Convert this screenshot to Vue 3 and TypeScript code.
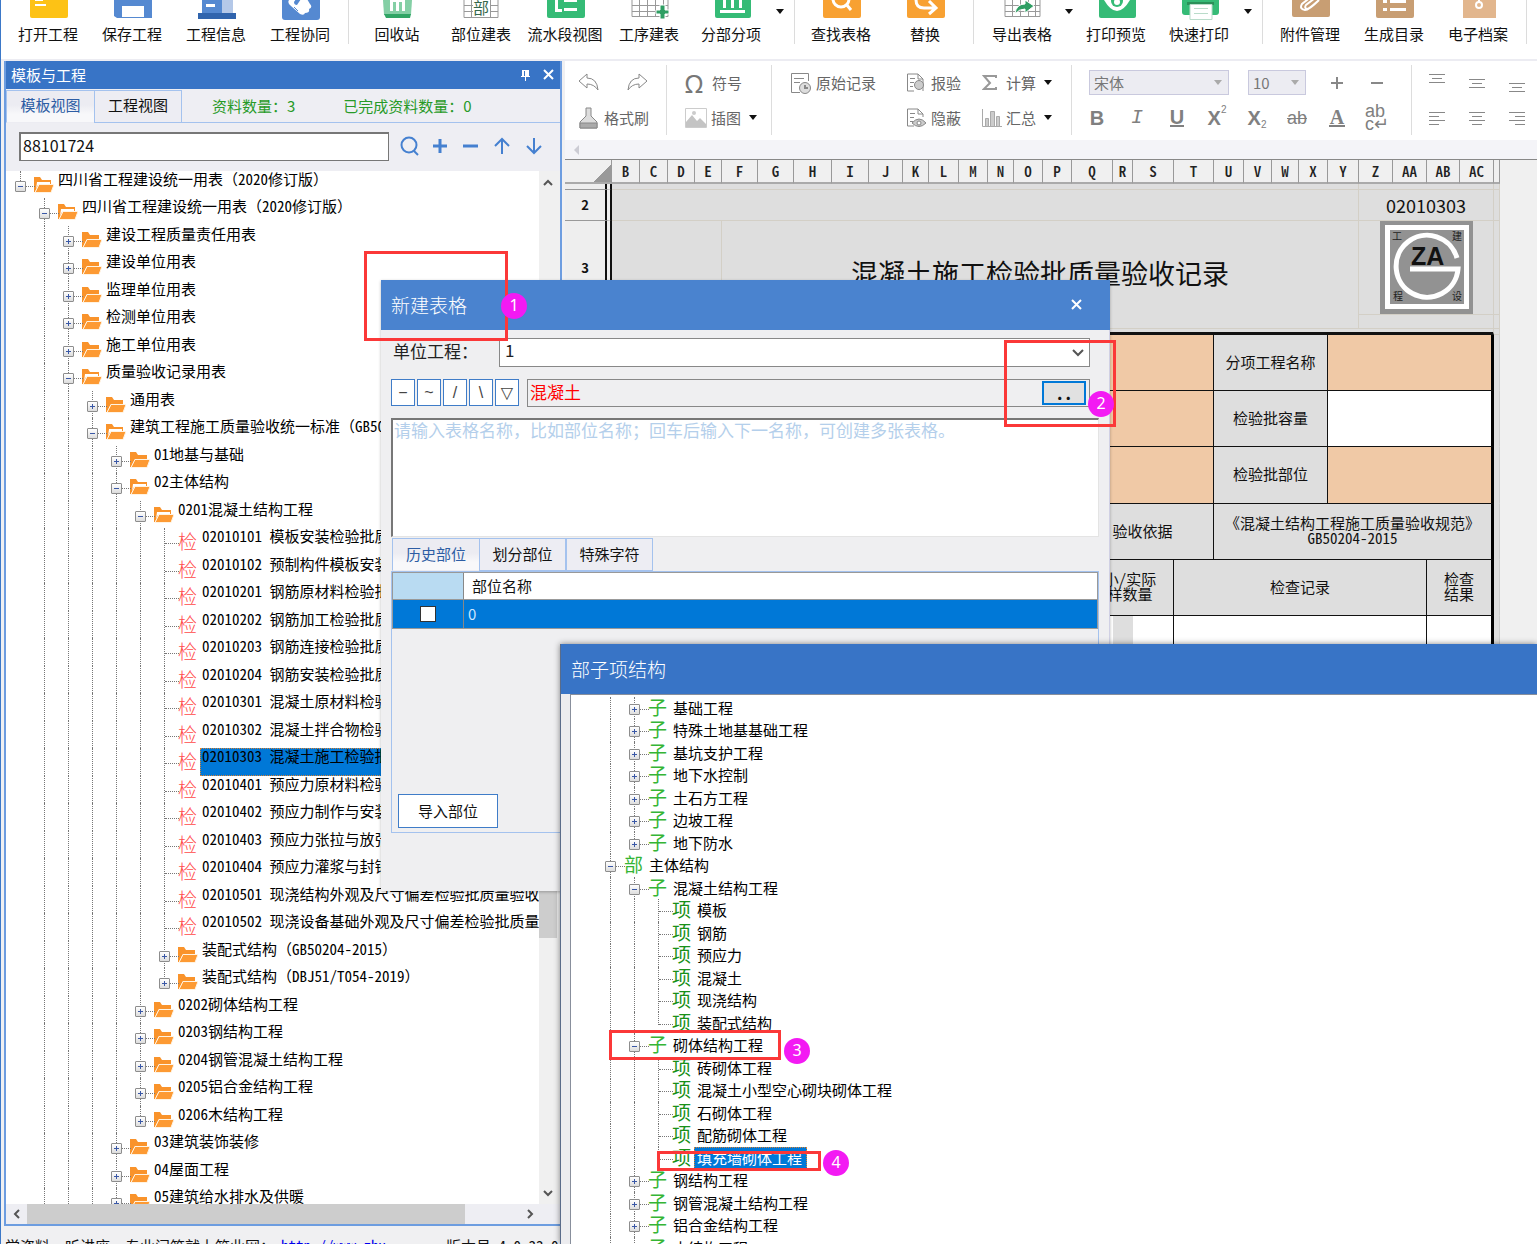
<script setup lang="ts">
interface Node { level: number; kind: string; text: string; selected?: boolean; open?: boolean }
interface Row extends Node { guides: boolean[]; continues: boolean }

const n = (level: number, kind: string, text: string, open = false, selected = false): Node => ({ level, kind, text, open, selected })

// Works out which vertical guide lines run on below each row.
function layout(nodes: Node[], openLevels: number[]): Row[] {
  const runsOn = (i: number, k: number): boolean => {
    for (let j = i + 1; j < nodes.length; j++) {
      if (nodes[j].level < k) return false
      if (nodes[j].level === k) return true
    }
    return openLevels.includes(k)
  }
  return nodes.map((node, i) => ({
    ...node,
    guides: Array.from({ length: node.level }, (_, k) => runsOn(i, k)),
    continues: runsOn(i, node.level),
  }))
}

const forms = layout([
  n(0, 'folder', '四川省工程建设统一用表（2020修订版）', true),
  n(1, 'folder', '四川省工程建设统一用表（2020修订版）', true),
  n(2, 'folder', '建设工程质量责任用表'),
  n(2, 'folder', '建设单位用表'),
  n(2, 'folder', '监理单位用表'),
  n(2, 'folder', '检测单位用表'),
  n(2, 'folder', '施工单位用表'),
  n(2, 'folder', '质量验收记录用表', true),
  n(3, 'folder', '通用表'),
  n(3, 'folder', '建筑工程施工质量验收统一标准（GB50300-2013）', true),
  n(4, 'folder', '01地基与基础'),
  n(4, 'folder', '02主体结构', true),
  n(5, 'folder', '0201混凝土结构工程', true),
  n(6, '检', '02010101 模板安装检验批质量验收记录'),
  n(6, '检', '02010102 预制构件模板安装检验批质量验收记录'),
  n(6, '检', '02010201 钢筋原材料检验批质量验收记录'),
  n(6, '检', '02010202 钢筋加工检验批质量验收记录'),
  n(6, '检', '02010203 钢筋连接检验批质量验收记录'),
  n(6, '检', '02010204 钢筋安装检验批质量验收记录'),
  n(6, '检', '02010301 混凝土原材料检验批质量验收记录'),
  n(6, '检', '02010302 混凝土拌合物检验批质量验收记录'),
  n(6, '检', '02010303 混凝土施工检验批质量验收记录', false, true),
  n(6, '检', '02010401 预应力原材料检验批质量验收记录'),
  n(6, '检', '02010402 预应力制作与安装检验批质量验收记录'),
  n(6, '检', '02010403 预应力张拉与放张检验批质量验收记录'),
  n(6, '检', '02010404 预应力灌浆与封锚检验批质量验收记录'),
  n(6, '检', '02010501 现浇结构外观及尺寸偏差检验批质量验收记录'),
  n(6, '检', '02010502 现浇设备基础外观及尺寸偏差检验批质量验收记录'),
  n(6, 'folder', '装配式结构（GB50204-2015）'),
  n(6, 'folder', '装配式结构（DBJ51/T054-2019）'),
  n(5, 'folder', '0202砌体结构工程'),
  n(5, 'folder', '0203钢结构工程'),
  n(5, 'folder', '0204钢管混凝土结构工程'),
  n(5, 'folder', '0205铝合金结构工程'),
  n(5, 'folder', '0206木结构工程'),
  n(4, 'folder', '03建筑装饰装修'),
  n(4, 'folder', '04屋面工程'),
  n(4, 'folder', '05建筑给水排水及供暖'),
], [1, 2, 3, 4])

const parts = layout([
  n(1, '子', '基础工程'),
  n(1, '子', '特殊土地基基础工程'),
  n(1, '子', '基坑支护工程'),
  n(1, '子', '地下水控制'),
  n(1, '子', '土石方工程'),
  n(1, '子', '边坡工程'),
  n(1, '子', '地下防水'),
  n(0, '部', '主体结构', true),
  n(1, '子', '混凝土结构工程', true),
  n(2, '项', '模板'),
  n(2, '项', '钢筋'),
  n(2, '项', '预应力'),
  n(2, '项', '混凝土'),
  n(2, '项', '现浇结构'),
  n(2, '项', '装配式结构'),
  n(1, '子', '砌体结构工程', true),
  n(2, '项', '砖砌体工程'),
  n(2, '项', '混凝土小型空心砌块砌体工程'),
  n(2, '项', '石砌体工程'),
  n(2, '项', '配筋砌体工程'),
  n(2, '项', '填充墙砌体工程', false, true),
  n(1, '子', '钢结构工程'),
  n(1, '子', '钢管混凝土结构工程'),
  n(1, '子', '铝合金结构工程'),
  n(1, '子', '木结构工程'),
], [0, 1])

const isLeaf = (r: Node) => r.kind === '检' || r.kind === '项'

// Splits a label so that brackets keep their full width beside half-width digits.
const runs = (text: string) => text.split(/([（）])/).filter(Boolean)
const isBracket = (s: string) => s === '（' || s === '）'

type Tool = { type: 'tool' | 'sep' | 'more'; label?: string; icon?: string }
const t = (label: string, icon: string): Tool => ({ type: 'tool', label, icon })
const sep: Tool = { type: 'sep' }
const more: Tool = { type: 'more' }
const tools: Tool[] = [
  t('打开工程', 'open'), t('保存工程', 'save'), t('工程信息', 'info'), t('工程协同', 'share'), sep,
  t('回收站', 'bin'), t('部位建表', 'part'), t('流水段视图', 'flow'), t('工序建表', 'step'), t('分部分项', 'div'), more, sep,
  t('查找表格', 'find'), t('替换', 'swap'), sep,
  t('导出表格', 'export'), more, t('打印预览', 'preview'), t('快速打印', 'print'), more, sep,
  t('附件管理', 'clip'), t('生成目录', 'list'), t('电子档案', 'archive'), sep,
]

const columns: [string, number][] = [
  ['B', 28], ['C', 28], ['D', 27], ['E', 27], ['F', 36], ['G', 36], ['H', 38], ['I', 37], ['J', 34], ['K', 26],
  ['L', 30], ['M', 29], ['N', 26], ['O', 29], ['P', 29], ['Q', 41], ['R', 20], ['S', 41], ['T', 40], ['U', 30],
  ['V', 28], ['W', 27], ['X', 29], ['Y', 31], ['Z', 34], ['AA', 34], ['AB', 33], ['AC', 34],
]

const marks = [
  { no: 1, x: 364, y: 251, w: 144, h: 90, cx: 514, cy: 306 },
  { no: 2, x: 1004, y: 340, w: 112, h: 87, cx: 1101, cy: 404 },
  { no: 3, x: 609, y: 1030, w: 172, h: 30, cx: 797, cy: 1051 },
  { no: 4, x: 657, y: 1151, w: 164, h: 20, cx: 836, cy: 1163 },
]
const symbols = ['−', '~', '/', '\\', '▽']
</script>

<template>
  <div class="app">
    <header class="ribbon">
      <template v-for="(tool, i) in tools" :key="i">
        <span v-if="tool.type === 'sep'" class="ribbon-sep"></span>
        <button v-else-if="tool.type === 'more'" class="more" aria-label="更多"><i class="caret"></i></button>
        <button v-else class="tool">
          <svg width="40" height="21" viewBox="0 0 40 21" aria-hidden="true">
            <g v-if="tool.icon === 'open'"><path fill="#fdc215" d="M2 0h38v16q0 2-2 2H4q-2 0-2-2z" /><path fill="#fff" d="M7 0h8v1H7zM7 4h11v2H7z" /></g>
            <g v-else-if="tool.icon === 'save'"><path fill="#5589d1" d="M2 0h38v18H5l-3-2z" /><path fill="#fff" d="M10 6h22v11H10z" /></g>
            <g v-else-if="tool.icon === 'info'"><path fill="#5589d1" d="M6 0h20v13H6z" /><path fill="#b4c8e8" d="M26 0h11v13H26z" /><path fill="#fff" d="M10 4h9v3h-9z" /><path fill="#3064ad" d="M2 13h38v6H2z" /></g>
            <g v-else-if="tool.icon === 'share'"><path fill="#5589d1" d="M2 0h38v17q0 3-3 3H5q-3 0-3-3z" /><path fill="#fff" d="M9 0q-2 3 2 6l9 8q4 2 5-1 5 0 4-4 4-2 1-5l-3-5h-6l-4 6q-3 0-3-3l2-3h-6z" /><path d="M14 7l4 4M11 10l4 4" stroke="#5589d1" stroke-width="1" /></g>
            <g v-else-if="tool.icon === 'bin'"><path fill="#84cfa5" d="M6 0h29l-1 15H7z" /><path fill="#31a565" d="M7 14h27l-1 4H9z" /><path fill="#fff" d="M13 0h15v11h-3V2h-3v9h-3V2h-3v9h-3z" /></g>
            <g v-else-if="tool.icon === 'part'" fill="none" stroke="#999"><path d="M3 0v17.500h34V0M3 5.500h34M3 11.500h34M10.500 0v17M29.500 0v17" /><path d="M12 0h17v16H12z" fill="#fff" stroke="none" /><text x="12" y="14" font-size="16" fill="#35684c" stroke="none">部</text></g>
            <g v-else-if="tool.icon === 'flow'"><path fill="#35bb76" d="M2 0h38v16q0 2-2 2H4q-2 0-2-2z" /><path fill="#fff" d="M10 0h3v9h4v3h-7zM19 0h13v2H19zM19 8h13v3H19z" /></g>
            <g v-else-if="tool.icon === 'step'"><path fill="none" stroke="#999" d="M3 0v16.500h36V0M3 5.500h36M3 11.500h36M10.500 0v16M18.500 0v16M26.500 0v16M34.500 0v16" /><path fill="#2f9e63" stroke="#fff" d="M31 5h5v5h4v4h-4v5h-5v-5h-4v-4h4z" /></g>
            <g v-else-if="tool.icon === 'div'"><path fill="#35bb76" d="M4 0h36v16q0 2-2 2H6q-2 0-2-2z" /><path fill="#fff" d="M12 0h3v8h-3zM20 0h3v8h-3zM28 0h3v8h-3zM9 10h25v3H9z" /></g>
            <g v-else-if="tool.icon === 'find'"><path fill="#f8a132" d="M2 0h38v16q0 2-2 2H4q-2 0-2-2z" /><circle cx="20" cy="-1" r="8" fill="none" stroke="#fff" stroke-width="3" /><path d="M25 4l5 6" stroke="#fff" stroke-width="3" /></g>
            <g v-else-if="tool.icon === 'swap'"><path fill="#f8a132" d="M2 0h38v16q0 2-2 2H4q-2 0-2-2z" /><path fill="none" stroke="#fff" stroke-width="3" d="M11 0q0 8 8 8h11M24 1l7 7-7 6" /></g>
            <g v-else-if="tool.icon === 'export'"><path fill="none" stroke="#999" d="M3 0v16.500h35V0M3 5.500h35M3 11.500h35M10.500 0v16M18.500 0v16M26.500 0v16M33.500 0v16" /><path fill="#2f9e63" stroke="#fff" d="M13 14q1-10 10-10V0l9 6-9 7V9q-6 0-10 5z" /></g>
            <g v-else-if="tool.icon === 'preview'"><path fill="#35bb76" d="M3 0h37v16q0 2-2 2H5q-2 0-2-2z" /><path fill="#fff" d="M8 0q13 22 26 0z" /><circle cx="21" cy="1" r="6" fill="#35bb76" /><circle cx="21" cy="2" r="3" fill="#fff" /></g>
            <g v-else-if="tool.icon === 'print'"><path fill="#35bb76" d="M3 0h37v12q0 3-3 3H6q-3 0-3-3z" /><path fill="#2a9058" d="M8 2h27v3H8z" /><path fill="#fff" stroke="#b9dcca" d="M11 4.500h22v15H11z" /><path fill="#b9dcca" d="M15 8h14v1H15zM15 13h14v1H15z" /></g>
            <g v-else-if="tool.icon === 'clip'"><path fill="#c89e73" d="M2 0h38v15q0 2-2 2H4q-2 0-2-2z" /><path fill="none" stroke="#fff" stroke-width="2" d="M25-2l-9 7q-2 3 1 4 2 0 12-9M22-4L12 4q-3 5 3 6 4 0 14-10" /></g>
            <g v-else-if="tool.icon === 'list'"><path fill="#c89e73" d="M2 0h38v16q0 2-2 2H4q-2 0-2-2z" /><path fill="#fff" d="M9 0h4v3H9zM16 0h16v3H16zM9 8h4v3H9zM16 8h16v3H16z" /></g>
            <g v-else><path fill="#e2b68d" d="M5 0h33v18H5z" /><circle cx="21" cy="5" r="3" fill="none" stroke="#fff" stroke-width="2" /><path stroke="#fff" stroke-width="2" d="M21 0v2" /></g>
          </svg>
          <span>{{ tool.label }}</span>
        </button>
      </template>
    </header>

    <div class="workspace">
      <aside class="panel">
        <div class="panel-head">
          <span>模板与工程</span>
          <button aria-label="固定"><svg width="12" height="12" viewBox="0 0 12 12"><path fill="#fff" d="M3 1h7v6h1v1H7v4H6V8H2V7h1z" /><path d="M5 2h1v5H5z" fill="#3874c6" /></svg></button>
          <button aria-label="关闭"><svg width="12" height="12" viewBox="0 0 12 12"><path stroke="#fff" stroke-width="2" d="M1 1l9 9M10 1l-9 9" /></svg></button>
        </div>
        <div class="panel-tabs">
          <button class="tab on">模板视图</button><button class="tab">工程视图</button>
          <span class="count">资料数量：3</span><span class="count">已完成资料数量：0</span>
        </div>
        <div class="search">
          <input value="88101724" aria-label="搜索" />
          <button aria-label="查找"><svg width="20" height="20" viewBox="0 0 20 20"><circle cx="9" cy="9" r="7.500" /><path d="M14 15l4 4" /></svg></button>
          <button aria-label="添加"><svg width="20" height="20" viewBox="0 0 20 20"><path d="M9 3v14M2 10h14" stroke-width="3" /></svg></button>
          <button aria-label="删除"><svg width="20" height="20" viewBox="0 0 20 20"><path d="M1 10h15" stroke-width="3" /></svg></button>
          <button aria-label="上移"><svg width="20" height="20" viewBox="0 0 20 20"><path d="M9 18V3M2 10l7-7 7 7" /></svg></button>
          <button aria-label="下移"><svg width="20" height="20" viewBox="0 0 20 20"><path d="M10 2v15M3 10l7 7 7-7" /></svg></button>
        </div>
        <div class="tree-box">
          <ul class="tree forms">
            <li v-for="(r, i) in forms" :key="i">
              <i v-for="(g, k) in r.guides" :key="k" class="cell" :class="{ line: g }"></i>
              <i class="cell own line" :class="{ half: !r.continues }">
                <button v-if="!isLeaf(r)" class="box" :class="{ plus: !r.open }" aria-label="展开或收起"></button>
              </i>
              <span class="icon">
                <svg v-if="r.kind === 'folder'" width="20" height="17" viewBox="0 0 20 17" aria-hidden="true">
                  <path fill="#f9932b" d="M0 1h6l2 3h9v4H5L1 16H0z" />
                  <path v-if="r.open" fill="#fff" d="M3 6h13v3H4l-2 4z" />
                  <path fill="#fd9a33" stroke="#fff3e2" d="M5 8.500h15l-3 8H1z" />
                </svg>
                <span v-else class="mark">{{ r.kind }}</span>
              </span>
              <span class="label" :class="{ selected: r.selected }"><span v-for="(s, k) in runs(r.text)" :key="k" :class="{ bracket: isBracket(s) }">{{ s }}</span></span>
            </li>
          </ul>
          <div class="vbar">
            <svg width="12" height="20" viewBox="0 0 12 20"><path d="M2 14l4-4 4 4" /></svg>
            <i class="gap-a"></i><i class="thumb"></i><i class="gap-b"></i>
            <svg width="12" height="20" viewBox="0 0 12 20"><path d="M2 7l4 4 4-4" /></svg>
          </div>
        </div>
        <div class="hbar">
          <svg width="20" height="12" viewBox="0 0 20 12"><path d="M12 2L8 6l4 4" /></svg>
          <i class="thumb"></i><i class="gap"></i>
          <svg width="20" height="12" viewBox="0 0 20 12"><path d="M9 2l4 4-4 4" /></svg>
        </div>
      </aside>

      <main class="editor">
        <div class="edit-bar">
          <div class="group g1">
            <div class="line-a">
              <button aria-label="撤销"><svg width="22" height="20" viewBox="0 0 22 20"><path d="M1 8l8-7v4q10 0 11 12-4-6-11-6v4z" /></svg></button>
              <button aria-label="重做"><svg width="22" height="20" viewBox="0 0 22 20"><path d="M21 8l-8-7v4Q3 5 2 17q4-6 11-6v4z" /></svg></button>
            </div>
            <div><button><svg width="22" height="24" viewBox="0 0 22 24"><path fill="#ddd" d="M8 2h5v8l6 6v6H2v-6l6-6z" /><path fill="#aaa" d="M2 17h17v5H2z" /></svg>格式刷</button></div>
          </div>
          <div class="group g2">
            <div><button><span class="omega">Ω</span>符号</button></div>
            <div><button><svg width="22" height="22" viewBox="0 0 22 22"><path stroke="#ccc" d="M.5 1.500h21v19H.5z" /><path fill="#c4c4c4" stroke="none" d="M1 20v-5l6-7 5 6 3-3 6 6v3z" /><circle cx="9" cy="6" r="2" fill="#ccc" stroke="none" /></svg>插图<i class="caret"></i></button></div>
          </div>
          <div class="group g3">
            <div><button><svg width="22" height="22" viewBox="0 0 22 22"><path stroke-width="1" d="M10 20.500H1.500v-19h17V9M4 6.500h10M4 10.500h6" /><circle cx="15" cy="16" r="5.500" fill="#ddd" /><path stroke-width="2" d="M15 13v3h3" /></svg>原始记录</button></div>
            <div></div>
          </div>
          <div class="group g4">
            <div><button><svg width="21" height="22" viewBox="0 0 21 22"><path d="M8 19H1.500V2H12l5 5M4 6.500h5M4 10.500h4M4 14.500h3M12 2v5h5v12" /><circle cx="13" cy="13" r="4.500" fill="#ccc" /></svg>报验</button></div>
            <div><button><svg width="21" height="22" viewBox="0 0 21 22"><path d="M8 19H1.500V2H12l5 5M4 6.500h5M4 10.500h4M4 14.500h3M12 2v5h5v3" /><path fill="#ccc" d="M6 16q7-8 14 0-7 7-14 0z" /><circle cx="13" cy="16" r="2" fill="#fff" /></svg>隐蔽</button></div>
          </div>
          <div class="group g5">
            <div><button><svg width="20" height="20" viewBox="0 0 20 20"><path stroke-width="2" stroke="#999" d="M14 5V3H2l6 7-6 6h12v-2" /></svg>计算<i class="caret"></i></button></div>
            <div><button><svg width="20" height="20" viewBox="0 0 20 20"><path stroke="#aaa" d="M.500 1v17.500H20" /><path fill="#ccc" stroke="#aaa" d="M3.500 10.500h3v8h-3zM8.500 3.500h4v15h-4zM14.500 8.500h3v10h-3z" /></svg>汇总<i class="caret"></i></button></div>
          </div>
          <div class="group g6">
            <div class="fonts">
              <select class="family" aria-label="字体"><option>宋体</option></select>
              <select class="size" aria-label="字号"><option>10</option></select>
              <button class="sq" aria-label="增大"><svg width="14" height="14" viewBox="0 0 14 14"><path stroke-width="2" d="M7 1v12M1 7h12" /></svg></button>
              <button class="sq" aria-label="减小"><svg width="14" height="14" viewBox="0 0 14 14"><path stroke-width="2" d="M1 7h12" /></svg></button>
            </div>
            <div class="styles">
              <button class="sq"><b>B</b></button>
              <button class="sq"><em>I</em></button>
              <button class="sq"><b class="under">U</b></button>
              <button class="sq"><b>X</b><sup>2</sup></button>
              <button class="sq"><b>X</b><sub>2</sub></button>
              <button class="sq"><s>ab</s></button>
              <button class="sq"><b class="serif">A</b></button>
              <button class="sq wrap"><span>ab</span><span>c↵</span></button>
            </div>
          </div>
          <div class="group g7">
            <div>
              <button class="sq" aria-label="顶端对齐"><svg width="16" height="20" viewBox="0 0 16 20"><path d="M0 1.500h16M3 5.500h10M0 9.500h16" /></svg></button>
              <button class="sq" aria-label="垂直居中"><svg width="16" height="20" viewBox="0 0 16 20"><path d="M0 6.500h16M3 10.500h10M0 14.500h16" /></svg></button>
              <button class="sq" aria-label="底端对齐"><svg width="16" height="20" viewBox="0 0 16 20"><path d="M0 10.500h16M3 14.500h10M0 18.500h16" /></svg></button>
            </div>
            <div>
              <button class="sq" aria-label="左对齐"><svg width="16" height="20" viewBox="0 0 16 20"><path d="M0 4.500h16M0 8.500h10M0 12.500h16M0 16.500h10" /></svg></button>
              <button class="sq" aria-label="居中"><svg width="16" height="20" viewBox="0 0 16 20"><path d="M0 4.500h16M3 8.500h10M0 12.500h16M3 16.500h10" /></svg></button>
              <button class="sq" aria-label="右对齐"><svg width="16" height="20" viewBox="0 0 16 20"><path d="M0 4.500h16M6 8.500h10M0 12.500h16M6 16.500h10" /></svg></button>
            </div>
          </div>
        </div>
        <div class="formula"><svg width="6" height="10" viewBox="0 0 6 10"><path fill="#ccccd4" d="M5 0v10L0 5z" /></svg></div>

        <table class="sheet">
          <colgroup>
            <col style="width: 47px" />
            <col v-for="c in columns" :key="c[0]" :style="{ width: c[1] + 'px' }" />
            <col style="width: 6px" />
          </colgroup>
          <thead>
            <tr><th class="corner"></th><th v-for="c in columns" :key="c[0]">{{ c[0] }}</th><th></th></tr>
          </thead>
          <tbody>
            <tr class="h6"><th></th><td colspan="24"></td><td colspan="4"></td><td></td></tr>
            <tr class="h32"><th>2</th><td colspan="24"></td><td colspan="4" class="code">02010303</td><td></td></tr>
            <tr class="h93">
              <th>3</th><td colspan="4" rowspan="2"></td><td colspan="20" rowspan="2" class="title">混凝土施工检验批质量验收记录</td>
              <td colspan="4" class="logo">
                <svg width="93" height="93" viewBox="0 0 93 93">
                  <path fill="#929292" d="M0 0h93v93H0z" /><path fill="#fff" d="M5 4h84v84H5z" /><path fill="#929292" d="M10 9h74v74H10z" />
                  <path fill="none" stroke="#fff" stroke-width="5" d="M77 37A31 31 0 1 0 78 48H30" />
                  <text x="31" y="44" font-size="25" font-weight="700" font-family="Liberation Sans" fill="#111">ZA</text>
                  <g font-size="10" fill="#222"><text x="12" y="19">工</text><text x="72" y="19">建</text><text x="13" y="79">程</text><text x="72" y="79">设</text></g>
                </svg>
              </td><td></td>
            </tr>
            <tr class="h14"><th></th><td colspan="4"></td><td></td></tr>
            <tr class="h6 top"><th></th><td colspan="28"></td><td></td></tr>
            <tr class="h56 form"><th>5</th><td colspan="19" class="peach"></td><td colspan="4">分项工程名称</td><td colspan="5" class="peach"></td><td></td></tr>
            <tr class="h56 form"><th>6</th><td colspan="19" class="peach"></td><td colspan="4">检验批容量</td><td colspan="5" class="white"></td><td></td></tr>
            <tr class="h57 form"><th>7</th><td colspan="19" class="peach"></td><td colspan="4">检验批部位</td><td colspan="5" class="peach"></td><td></td></tr>
            <tr class="h56 form"><th>8</th><td colspan="15"></td><td colspan="4">验收依据</td><td colspan="9">《混凝土结构工程施工质量验收规范》<br /><span class="half-width">GB50204-2015</span></td><td></td></tr>
            <tr class="h56 form"><th>9</th><td colspan="15"></td><td colspan="3">最小<span class="half-width">/</span>实际<br />抽样数量</td><td colspan="8">检查记录</td><td colspan="2">检查<br />结果</td><td></td></tr>
            <tr class="h56 form"><th>10</th><td colspan="15" class="white"></td><td class="white plain"></td><td class="plain"></td><td class="white"></td><td colspan="8" class="white"></td><td colspan="2" class="white"></td><td></td></tr>
          </tbody>
        </table>
      </main>
    </div>

    <footer class="status">
      <span>学资料、听讲座、专业问答就上筑业网：</span><a href="#">http://www.zhu</a><span>版本号:4.0.33.0</span>
    </footer>

    <section class="dialog create">
      <h2>新建表格<button aria-label="关闭"><svg width="12" height="12" viewBox="0 0 12 12"><path stroke="#fff" stroke-width="2" d="M1 1l9 9M10 1l-9 9" /></svg></button></h2>
      <div class="create-body">
        <div class="unit"><label for="unit">单位工程：</label><select id="unit"><option>1</option></select></div>
        <div class="name">
          <button v-for="s in symbols" :key="s" class="sym">{{ s }}</button>
          <div class="field"><input value="混凝土" aria-label="表格名称" /><button>..</button></div>
        </div>
        <textarea aria-label="部位名称" placeholder="请输入表格名称，比如部位名称；回车后输入下一名称，可创建多张表格。"></textarea>
        <div class="part-tabs"><button class="tab on">历史部位</button><button class="tab">划分部位</button><button class="tab">特殊字符</button></div>
        <div class="history">
          <table>
            <thead><tr><th class="tick"></th><th>部位名称</th></tr></thead>
            <tbody><tr><td class="tick"><input type="checkbox" aria-label="选择" /></td><td>0</td></tr></tbody>
          </table>
          <button class="import">导入部位</button>
        </div>
      </div>
    </section>

    <section class="dialog structure">
      <h2>部子项结构</h2>
      <div class="structure-body">
        <ul class="tree parts">
          <li v-for="(r, i) in parts" :key="i">
            <i v-for="(g, k) in r.guides" :key="k" class="cell" :class="{ line: g }"></i>
            <i class="cell own line" :class="{ half: !r.continues }">
              <button v-if="!isLeaf(r)" class="box" :class="{ plus: !r.open }" aria-label="展开或收起"></button>
            </i>
            <span class="icon"><span class="mark" :class="{ dark: r.kind === '项' }">{{ r.kind }}</span></span>
            <span class="label" :class="{ selected: r.selected }">{{ r.text }}</span>
          </li>
        </ul>
      </div>
    </section>

    <template v-for="m in marks" :key="m.no">
      <div class="frame" :style="{ left: m.x + 'px', top: m.y + 'px', width: m.w + 'px', height: m.h + 'px' }"></div>
      <div class="pin" :style="{ left: m.cx - 13 + 'px', top: m.cy - 13 + 'px' }">{{ m.no }}</div>
    </template>
  </div>
</template>

<style>
body { margin: 0; }
</style>

<style scoped>
* { box-sizing: border-box; }
.app {
  position: relative; display: flex; flex-direction: column; height: 100vh; overflow: hidden;
  border-left: 1px solid #3b78c8; background: #f0f0f2; color: #111;
  font: 15px/20px "Noto Sans CJK SC", sans-serif;
}
button, input, select, textarea { font: inherit; color: inherit; margin: 0; padding: 0; border: 0; border-radius: 0; background: none; }
button { white-space: nowrap; }
svg { display: block; flex: none; }
.caret { display: inline-block; width: 8px; border: 4px solid transparent; border-top: 5px solid #111; border-bottom: 0; }

.ribbon {
  display: grid; flex: none; height: 61px; padding-left: 5px; background: #fff; border-bottom: 2px solid #ececf2; overflow: hidden;
  grid-template-columns: repeat(4, 84px) 13px repeat(4, 84px) 80px 18px 10px 84px 84px 13px 84px 10px 84px 82px 16px 12px 84px 84px 84px 13px;
}
.tool { display: flex; flex-direction: column; align-items: center; gap: 3px; height: 46px; }
.ribbon-sep { justify-self: center; width: 1px; height: 44px; background: #dcdcdc; }
.more { height: 22px; }
.more .caret { display: block; margin: 0 auto; }

.workspace { display: flex; flex: 1; min-height: 0; }
.panel { display: flex; flex-direction: column; flex: none; width: 558px; margin-left: 3px; border: 2px solid #6d9de0; border-top: 0; background: #eeeef3; }
.panel-head { display: flex; align-items: center; flex: none; height: 28px; padding: 0 5px 1px; gap: 12px; background: #3874c6; color: #fff; }
.panel-head span { flex: 1; }
.panel-tabs { display: flex; flex: none; height: 34px; padding-top: 1px; }
.tab { width: 88px; padding-bottom: 3px; border: 1px solid #a4c2ee; color: #111; background: #ededf3; }
.tab.on { border-bottom-color: transparent; border-right: 0; color: #2d5da4; background: linear-gradient(#ececf2, #ececf2 45%, #f8f8fa 75%); }
.count { padding: 6px 0 0 30px; flex: none; border-bottom: 1px solid #a4c2ee; color: #279a27; }
.count:last-child { flex: 1; padding-left: 48px; }
.search { display: flex; align-items: center; flex: none; height: 48px; padding: 0 0 2px 13px; gap: 11px; }
.search input { width: 370px; height: 29px; padding: 0 0 3px 2px; border: 1px solid #777; border-width: 2px 1px 1px 2px; background: #fff; font-size: 16px; }
.search svg { fill: none; stroke: #4580d0; stroke-width: 2; }
.tree-box { display: flex; flex: 1; min-height: 0; background: #fff; }

.tree { flex: 1; min-width: 0; margin: 0; padding: 0; list-style: none; overflow: hidden; }
.tree li { display: flex; white-space: nowrap; }
.cell { position: relative; flex: none; width: 24px; }
.line::before { content: ""; position: absolute; left: 12px; top: 0; bottom: 0; border-left: 1px dotted #777; }
.line.half::before { bottom: 40%; }
.own::after { content: ""; position: absolute; left: 13px; width: 14px; border-top: 1px dotted #777; }
.box {
  position: absolute; z-index: 1; left: 7px; width: 11px; height: 11px; border: 1px solid #8d8d8d; border-radius: 1px;
  background: linear-gradient(#3a58a6, #3a58a6) center / 5px 1px no-repeat, linear-gradient(#fff, #ddd);
}
.box.plus { background: linear-gradient(#3a58a6, #3a58a6) center / 5px 1px no-repeat, linear-gradient(#3a58a6, #3a58a6) center / 1px 5px no-repeat, linear-gradient(#fff, #ddd); }
.icon { flex: none; width: 26px; padding-left: 2px; }
.mark { display: block; font-size: 19px; font-weight: 300; }
.label, .half-width { font-feature-settings: "hwid"; }
.label { color: #000; }
.bracket { font-feature-settings: normal; }
.forms { padding-left: 2px; }
.forms li { height: 27px; }
.forms li:nth-child(even) { height: 28px; }
.forms .box { top: 10px; }
.forms .own::after { top: 15px; }
.forms svg { margin-top: 5px; }
.forms .mark { margin-top: 3px; line-height: 20px; color: #ff4a4a; }
.forms .label { padding-right: 4px; line-height: 16px; }
.forms .selected { margin-left: -2px; padding-left: 2px; outline: 1px dotted #d98334; outline-offset: -1px; background: #0078d7; }

.vbar { display: flex; flex-direction: column; align-items: center; flex: none; width: 21px; padding-right: 3px; background: #f0f0f0; }
.hbar { display: flex; align-items: center; flex: none; height: 20px; padding: 0 21px 0 1px; }
.vbar svg, .hbar svg { fill: none; stroke: #555; stroke-width: 2; }
.thumb { background: #cdcdcd; }
.vbar .thumb { flex: 76; width: 18px; }
.gap-a { flex: 670; }
.gap-b { flex: 246; }
.hbar .thumb { flex: 435; height: 20px; }
.hbar .gap { flex: 54; }

.editor { flex: 1; min-width: 0; margin-left: 3px; background: #f0f0f0; overflow: hidden; }
.edit-bar { display: flex; height: 79px; padding: 4px 0 5px 2px; background: #fff; color: #666; }
.group { flex: none; }
.group > div { display: flex; align-items: center; height: 35px; }
.group button { display: flex; align-items: center; }
.group svg { margin-right: 4px; fill: none; stroke: #888; }
.group .caret { margin-left: 8px; }
.g1, .g2, .g5, .g6 { border-right: 1px solid #ddd; }
.g1 { width: 100px; padding-left: 11px; }
.g1 .line-a { gap: 22px; }
.g2 { width: 105px; padding-left: 18px; }
.g3 { width: 134px; padding-left: 18px; }
.g4 { width: 76px; }
.g5 { width: 90px; }
.g6 { width: 340px; padding-left: 5px; }
.g7 { padding-left: 5px; }
.omega { width: 27px; font: 25px/24px "Noto Sans", sans-serif; color: #777; text-align: left; }
.group .sq { justify-content: center; width: 40px; height: 35px; color: #808080; }
.group .sq svg { margin: 0; }
.fonts { padding-left: 12px; }
.fonts select { height: 25px; padding: 0 4px; appearance: none; border: 1px solid #c9c9de; color: #777;
  background: #ececf2 url("data:image/svg+xml,%3Csvg xmlns='http://www.w3.org/2000/svg' width='8' height='5'%3E%3Cpath fill='%23aaa' d='M0 0h8L4 5z'/%3E%3C/svg%3E") no-repeat right 6px center; }
.family { width: 140px; margin-right: 19px; }
.size { width: 58px; margin-right: 11px; }
.styles { font: 18px/20px "Liberation Sans", sans-serif; }
.styles b { font-size: 20px; }
.styles em { font: italic 20px/20px "Liberation Mono", monospace; }
.styles sup, .styles sub { font-size: 10px; line-height: 12px; }
.styles sup { align-self: flex-start; margin-top: 4px; }
.styles sub { align-self: flex-end; margin-bottom: 4px; }
.styles .under, .styles .serif { border-bottom: 2px solid #808080; line-height: 16px; }
.styles .serif { font-family: "Liberation Serif", serif; padding: 0 1px; }
.group .wrap { flex-direction: column; align-items: flex-start; padding-left: 8px; line-height: 13px; }

.formula { height: 20px; padding: 5px 0 0 9px; border-bottom: 1px solid #888; background: #f4f4f8; }

.sheet { table-layout: fixed; width: 935px; border-collapse: separate; border-spacing: 0; }
.sheet th, .sheet td { padding: 0; overflow: hidden; text-align: center; vertical-align: middle; }
.sheet thead th { height: 24px; border-right: 1px solid #999; border-bottom: 2px solid #aaa; background: #f0f0f0; font-weight: 500; font-feature-settings: "hwid"; color: #222; }
.sheet thead .corner { background: linear-gradient(135deg, transparent 75%, #999 75%) #f0f0f0; }
.sheet tbody th { border-right: 7px double #111; border-bottom: 1px solid #999; background: #eee; font-size: 13px; line-height: 14px; }
.sheet td { border-right: 1px solid #d3cfc6; border-bottom: 1px solid #d3cfc6; background: #dedede; line-height: 15px; }
.h6 th, .h6 td { height: 6px; font-size: 0; line-height: 0; }
.h14 th, .h14 td { height: 14px; line-height: 0; }
.h32 th { height: 31px; }
.h93 th { height: 93px; }
.h56 th { height: 56px; }
.h57 th { height: 57px; }
.sheet .code { font-size: 18px; }
.sheet .title { padding-bottom: 4px; font-size: 27px; line-height: 32px; }
.logo svg { margin: 0 auto; }
.sheet .top td:nth-child(2) { border-bottom: 3px solid #111; }
.sheet .form td { padding-bottom: 3px; border-right: 1px solid #111; border-bottom: 1px solid #111; }
.sheet .form td:nth-last-child(2) { border-right: 3px solid #000; }
.sheet .form td:last-child { border-color: transparent #ccc transparent transparent; }
.sheet .peach { background: #f0c9a6; }
.sheet .white { background: #fff; }
.sheet .form .plain { border-right-color: transparent; }

.status { display: flex; flex: none; height: 18px; padding: 10px 0 0 4px; white-space: nowrap; overflow: hidden; font-feature-settings: "hwid"; }
.status a { width: 171px; padding-left: 6px; color: #00e; }

.dialog { position: absolute; }
.dialog h2 { display: flex; align-items: center; height: 50px; margin: 0; padding: 0 0 1px 10px; color: #fff; font-size: 19px; font-weight: 300; }
.create { left: 380px; top: 280px; width: 729px; height: 611px; display: flex; flex-direction: column; background: #efeff1; border-right: 1px solid #d0d0e4; box-shadow: 0 1px 3px #0004; }
.create h2 { background: #4a83cf; margin-right: -1px; }
.create h2 button { margin: 0 27px 0 auto; }
.create-body { display: flex; flex-direction: column; flex: 1; padding: 8px 10px 0; font-size: 17px; }
.unit { display: flex; align-items: center; height: 29px; padding: 0 9px 0 2px; color: #222; }
.unit label { width: 106px; padding-bottom: 3px; }
.unit select { flex: 1; height: 29px; padding: 0 0 5px 5px; appearance: none; border: 1px solid #888;
  background: #fff url("data:image/svg+xml,%3Csvg xmlns='http://www.w3.org/2000/svg' width='12' height='8'%3E%3Cpath fill='none' stroke='%23555' stroke-width='2' d='M1 1l5 5 5-5'/%3E%3C/svg%3E") no-repeat right 5px center; }
.name { display: flex; gap: 2px; height: 28px; margin: 12px 9px 11px 0; }
.sym { width: 24px; height: 27px; border: 1px solid #3f7cc8; background: #fff; color: #444; font: 16px/20px "Liberation Sans", "DejaVu Sans", sans-serif; }
.field { display: flex; align-items: center; flex: 1; margin-left: 6px; padding-right: 3px; border: 1px solid #888; }
.field input { flex: 1; padding: 0 0 3px 2px; color: #f00; }
.field button { width: 44px; height: 24px; border: 2px solid #0078d7; background: #e1e1e1; font-weight: 700; line-height: 16px; font-feature-settings: "hwid"; }
.create textarea { height: 119px; padding: 0 1px; resize: none; border: 1px solid #e4e4e4; border-top: 2px solid #777; border-left: 2px solid #777; background: #fff; line-height: 20px; }
.create textarea::placeholder { color: #b4cfeb; opacity: 1; }
.part-tabs { display: flex; height: 34px; margin-top: 1px; padding-left: 1px; border-bottom: 1px solid #a4c2ee; font-size: 15px; }
.part-tabs .tab { width: 87px; padding-bottom: 1px; }
.history { height: 261px; border: 1px solid #a4c2ee; border-top: 0; font-size: 15px; }
.history table { width: 100%; border-spacing: 0; border: 1px solid #999; table-layout: fixed; }
.history th, .history td { height: 27px; padding: 0 0 0 8px; text-align: left; font-weight: 400; border-bottom: 1px solid #999; background: #fff; }
.history td { height: 28px; padding-left: 4px; border-bottom: 0; background: #0078d7; color: #cfe6ff; }
.history .tick { width: 71px; padding: 0; text-align: center; border-right: 1px solid #888; }
.history th.tick { background: #b9dbf2; }
.history input { display: block; width: 16px; height: 16px; margin: 0 auto; appearance: none; border: 1px solid #333; background: #fff; }
.import { width: 100px; height: 34px; margin: 165px 0 0 6px; border: 1px solid #3f7cc8; background: #fff; }

.structure { left: 559px; top: 644px; right: 0; bottom: 0; display: flex; flex-direction: column; border-left: 1px solid #5a6c8a; box-shadow: 0 0 6px #0007; background: #ececef; }
.structure h2 { flex: none; background: #3874c6; }
.structure-body { flex: 1; min-height: 0; margin-left: 9px; padding: 2px 0 0 27px; border: 1px solid #888f9c; border-right: 0; border-bottom: 0; background: #fff; overflow: hidden; }
.parts li { height: 22px; }
.parts li:nth-child(even) { height: 23px; }
.parts .box { top: 7px; }
.parts .own::after { top: 12px; }
.parts .icon { padding-left: 2px; width: 27px; }
.parts .mark { font-weight: 400; line-height: 20px; color: #35b535; }
.parts .dark { color: #189018; }
.parts .label { line-height: 21px; }
.parts .selected { margin-left: -3px; padding: 0 5px 0 3px; background: #0078d7; color: #fff; outline: 1px dotted #d98334; outline-offset: -1px; }

.frame { position: absolute; border: 3px solid #fb3838; margin-left: -1px; }
.pin { position: absolute; width: 26px; height: 26px; margin-left: -1px; border-radius: 13px; background: #f31af3; color: #fff; text-align: center; font: 16px/25px "Noto Sans", sans-serif; }
</style>
